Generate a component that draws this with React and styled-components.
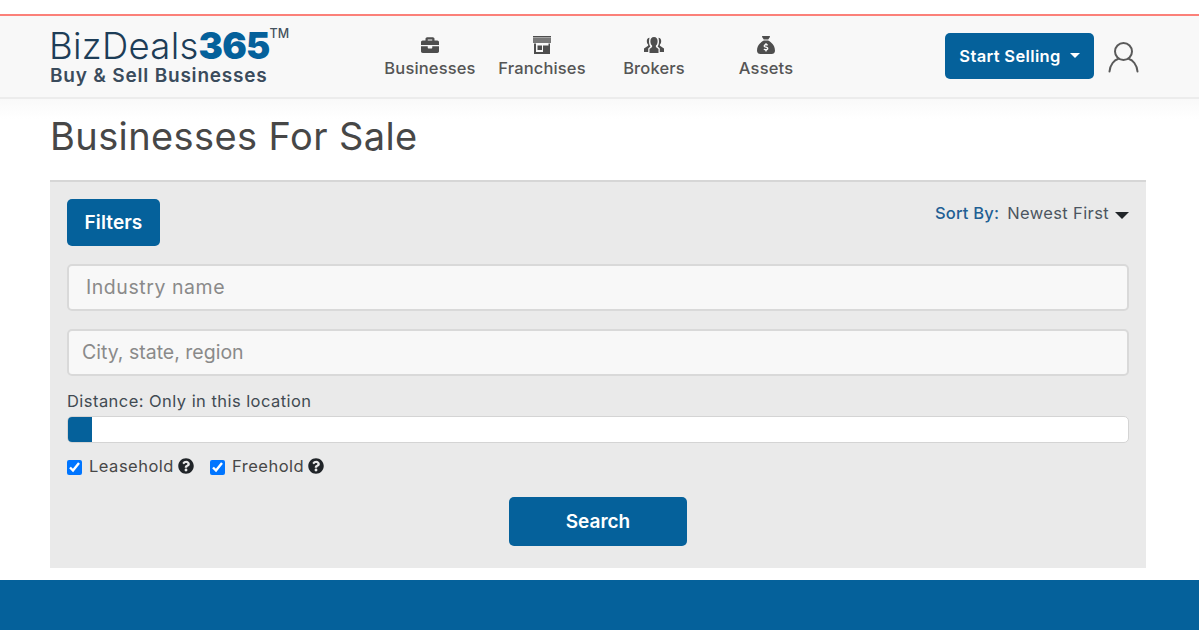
import React from 'react';
import styled, { createGlobalStyle } from 'styled-components';
import { FaBriefcase, FaQuestionCircle } from 'react-icons/fa';
import { FaSackDollar } from 'react-icons/fa6';

const BLUE = '#05619b';
const FONT = '"Inter", "Open Sans", "Liberation Sans", sans-serif';

const GlobalStyle = createGlobalStyle`
  html, body {
    margin: 0;
    padding: 0;
    background: #fff;
    font-family: ${FONT};
    overflow: hidden;
  }
  * { box-sizing: border-box; }
`;

const Page = styled.div`
  width: 1199px;
  height: 630px;
  display: flex;
  flex-direction: column;
  padding-top: 14px;
`;

const Header = styled.header`
  height: 85px;
  flex: none;
  display: flex;
  align-items: center;
  padding: 0 60px 0 49px;
  background: #f8f8f8;
  border-top: 2px solid #fb8079;
  border-bottom: 2px solid #ececec;
`;

const Logo = styled.div`
  width: 325px;
  flex: none;
  display: flex;
  flex-direction: column;
  margin-top: 1px;
`;

const LogoTop = styled.div`
  display: flex;
  align-items: flex-start;
  font-size: 36.5px;
  line-height: 38px;
  font-weight: 300;
  color: #1d3d57;
  letter-spacing: 0.3px;
`;

const LogoNum = styled.span`
  font-weight: 900;
  color: ${BLUE};
  letter-spacing: -0.8px;
`;

const LogoTm = styled.span`
  font-size: 12.5px;
  line-height: 14px;
  font-weight: 500;
  color: #44525e;
  letter-spacing: 0;
`;

const LogoSub = styled.div`
  font-size: 19px;
  line-height: 22px;
  font-weight: 600;
  color: #3a4b5c;
  letter-spacing: 0.8px;
  padding-left: 1px;
`;

const Nav = styled.nav`
  display: flex;
  flex: 1;
`;

const NavItem = styled.a`
  width: 112px;
  display: flex;
  flex-direction: column;
  align-items: center;
  color: #555;
  font-size: 16.5px;
  font-weight: 500;
  line-height: 20px;
  letter-spacing: 0.15px;
  gap: 3px;
`;

const NavIcon = styled.span`
  height: 20px;
  display: flex;
  align-items: center;
  justify-content: center;
  color: #4e4e4e;
`;

const SellButton = styled.button`
  width: 149px;
  height: 46px;
  margin-bottom: 2px;
  border: 0;
  border-radius: 5px;
  background: ${BLUE};
  color: #fff;
  font: 600 16.5px ${FONT};
  letter-spacing: 0.35px;
  display: flex;
  align-items: center;
  justify-content: center;
  gap: 9px;
`;

const WhiteCaret = styled.span`
  width: 0;
  height: 0;
  border-left: 5px solid transparent;
  border-right: 5px solid transparent;
  border-top: 5px solid #fff;
`;

const UserLink = styled.span`
  margin-left: 14px;
  display: flex;
  color: #5a5a5a;
`;

const Fade = styled.div`
  height: 20px;
  flex: none;
  background: linear-gradient(#f9f9f9, #fff);
`;

const Main = styled.main`
  flex: 1;
  padding: 0 53px 0 50px;
  display: flex;
  flex-direction: column;
`;

const Title = styled.h1`
  margin: 0 0 19px;
  height: 42px;
  font-size: 38px;
  line-height: 34px;
  font-weight: 400;
  color: #474747;
  letter-spacing: 0.4px;
`;

const Panel = styled.section`
  height: 388px;
  background: #eaeaea;
  border-top: 2px solid #d6d6d6;
  padding: 17px 17px 0;
  display: flex;
  flex-direction: column;
`;

const TopRow = styled.div`
  display: flex;
  justify-content: space-between;
  align-items: flex-start;
  margin-bottom: 18px;
`;

const FilterButton = styled.button`
  width: 93px;
  height: 47px;
  border: 0;
  border-radius: 5px;
  background: ${BLUE};
  color: #fff;
  font: 600 19px ${FONT};
  letter-spacing: 0.1px;
`;

const Sort = styled.div`
  display: flex;
  align-items: center;
  margin-top: 5px;
  font-size: 16.5px;
  line-height: 18px;
`;

const SortLabel = styled.span`
  color: #1f5f94;
  font-weight: 500;
  margin-right: 8px;
  letter-spacing: 0.2px;
`;

const SortValue = styled.span`
  color: #4c5560;
  margin-right: 6px;
  letter-spacing: 0.37px;
`;

const DarkCaret = styled.span`
  width: 0;
  height: 0;
  margin-top: 4px;
  border-left: 7px solid transparent;
  border-right: 7px solid transparent;
  border-top: 7px solid #212529;
`;

const TextInput = styled.input`
  display: block;
  width: 100%;
  height: 47px;
  flex: none;
  margin-bottom: ${p => p.$gap}px;
  padding: 0 ${p => p.$indent}px 2px;
  background: #f8f8f8;
  border: 2px solid #d9d9d9;
  border-radius: 5px;
  outline: 0;
  font: 400 19.5px ${FONT};
  letter-spacing: ${p => p.$track}px;
  &::placeholder {
    color: #8a8a8a;
    opacity: 1;
  }
`;

const DistanceLabel = styled.div`
  font-size: 16.5px;
  line-height: 20px;
  color: #414a52;
  margin: 15px 0 5px;
  letter-spacing: 0.45px;
`;

const Slider = styled.div`
  height: 27px;
  background: #fff;
  border: 1px solid #d4d4d4;
  border-radius: 5px;
  overflow: hidden;
`;

const SliderHandle = styled.div`
  width: 24px;
  height: 100%;
  background: ${BLUE};
`;

const Checks = styled.div`
  display: flex;
  align-items: center;
  margin-top: 14px;
  height: 18px;
`;

const CheckLabel = styled.label`
  display: flex;
  align-items: center;
  margin-right: 16px;
  font-size: 16.5px;
  color: #474747;
  letter-spacing: 0.5px;
`;

const CheckBox = styled.input`
  width: 15px;
  height: 15px;
  margin: 2px 7px 0 0;
`;

const HelpIcon = styled.span`
  display: flex;
  margin-left: 4px;
  color: #212529;
  font-size: 16px;
`;

const SearchRow = styled.div`
  display: flex;
  justify-content: center;
  margin-top: 22px;
`;

const SearchButton = styled.button`
  width: 178px;
  height: 49px;
  border: 0;
  border-radius: 5px;
  background: ${BLUE};
  color: #fff;
  font: 600 19px ${FONT};
  letter-spacing: 0;
`;

const Footer = styled.footer`
  height: 50px;
  flex: none;
  background: ${BLUE};
`;

const StoreIcon = () => (
  <svg width="18" height="18" viewBox="0 0 18 18" fill="currentColor">
    <path d="M0 0h18v1.500H0z" />
    <path opacity="0.75" d="M0 2h18v5H0z" />
    <path d="M1 7.500h2V16h7V9.500h5.500v-2H17V18H1z" />
    <path d="M4.500 9.500H9V14H4.500zM11.500 11H15v5h-3.500z" />
  </svg>
);

const BrokersIcon = () => (
  <svg width="20" height="17" viewBox="0 0 20 17" fill="currentColor">
    <path d="M10 0c2.400 0 3.600 1.900 3.600 4.200 0 2-.8 3.600-1.700 4.400v1.300l2.600 2.100V16h-9v-4l2.600-2.100V8.600C7.200 7.800 6.400 6.200 6.400 4.200 6.400 1.900 7.600 0 10 0z" />
    <path d="M5.500.8C3.800.8 2.800 2.200 2.800 4c0 1.600.6 2.900 1.300 3.600v1.200L0 11.600V15h4.200v-3.600l2.200-1.800C5.500 8.200 5 6.300 5 4.400 5 3 5.300 1.800 5.500.8zM14.500.8c1.700 0 2.700 1.400 2.700 3.200 0 1.600-.6 2.900-1.300 3.600v1.200l4.100 2.800V15h-4.200v-3.600l-2.200-1.800c.9-1.400 1.400-3.300 1.400-5.200 0-1.400-.3-2.600-.5-3.600z" />
  </svg>
);

const UserIcon = () => (
  <svg width="31" height="32" viewBox="0 0 31 32" fill="none" stroke="currentColor" strokeWidth="2" strokeLinecap="round">
    <circle cx="15.500" cy="10.500" r="8.500" />
    <path d="M1.500 30.500c.5-7 5-11.500 8.500-12.500M29.500 30.500c-.5-7-5-11.500-8.500-12.500" />
  </svg>
);

const navItems = [
  { label: 'Businesses', icon: <FaBriefcase size={18} /> },
  { label: 'Franchises', icon: <StoreIcon /> },
  { label: 'Brokers', icon: <BrokersIcon /> },
  { label: 'Assets', icon: <FaSackDollar size={18} /> },
];

const App = () => (
  <Page>
    <GlobalStyle />
    <Header>
      <Logo>
        <LogoTop>
          BizDeals<LogoNum>365</LogoNum><LogoTm>TM</LogoTm>
        </LogoTop>
        <LogoSub>Buy &amp; Sell Businesses</LogoSub>
      </Logo>
      <Nav>
        {navItems.map(item => (
          <NavItem key={item.label}>
            <NavIcon>{item.icon}</NavIcon>
            {item.label}
          </NavItem>
        ))}
      </Nav>
      <SellButton>Start Selling <WhiteCaret /></SellButton>
      <UserLink><UserIcon /></UserLink>
    </Header>
    <Fade />
    <Main>
      <Title>Businesses For Sale</Title>
      <Panel>
        <TopRow>
          <FilterButton>Filters</FilterButton>
          <Sort>
            <SortLabel>Sort By:</SortLabel>
            <SortValue>Newest First</SortValue>
            <DarkCaret />
          </Sort>
        </TopRow>
        <TextInput placeholder="Industry name" $gap={18} $indent={17} $track={0.55} />
        <TextInput placeholder="City, state, region" $gap={0} $indent={13} $track={0} />
        <DistanceLabel>Distance: Only in this location</DistanceLabel>
        <Slider><SliderHandle /></Slider>
        <Checks>
          <CheckLabel>
            <CheckBox type="checkbox" defaultChecked />
            Leasehold
            <HelpIcon><FaQuestionCircle /></HelpIcon>
          </CheckLabel>
          <CheckLabel>
            <CheckBox type="checkbox" defaultChecked />
            Freehold
            <HelpIcon><FaQuestionCircle /></HelpIcon>
          </CheckLabel>
        </Checks>
        <SearchRow>
          <SearchButton>Search</SearchButton>
        </SearchRow>
      </Panel>
    </Main>
    <Footer />
  </Page>
);

export default App;
